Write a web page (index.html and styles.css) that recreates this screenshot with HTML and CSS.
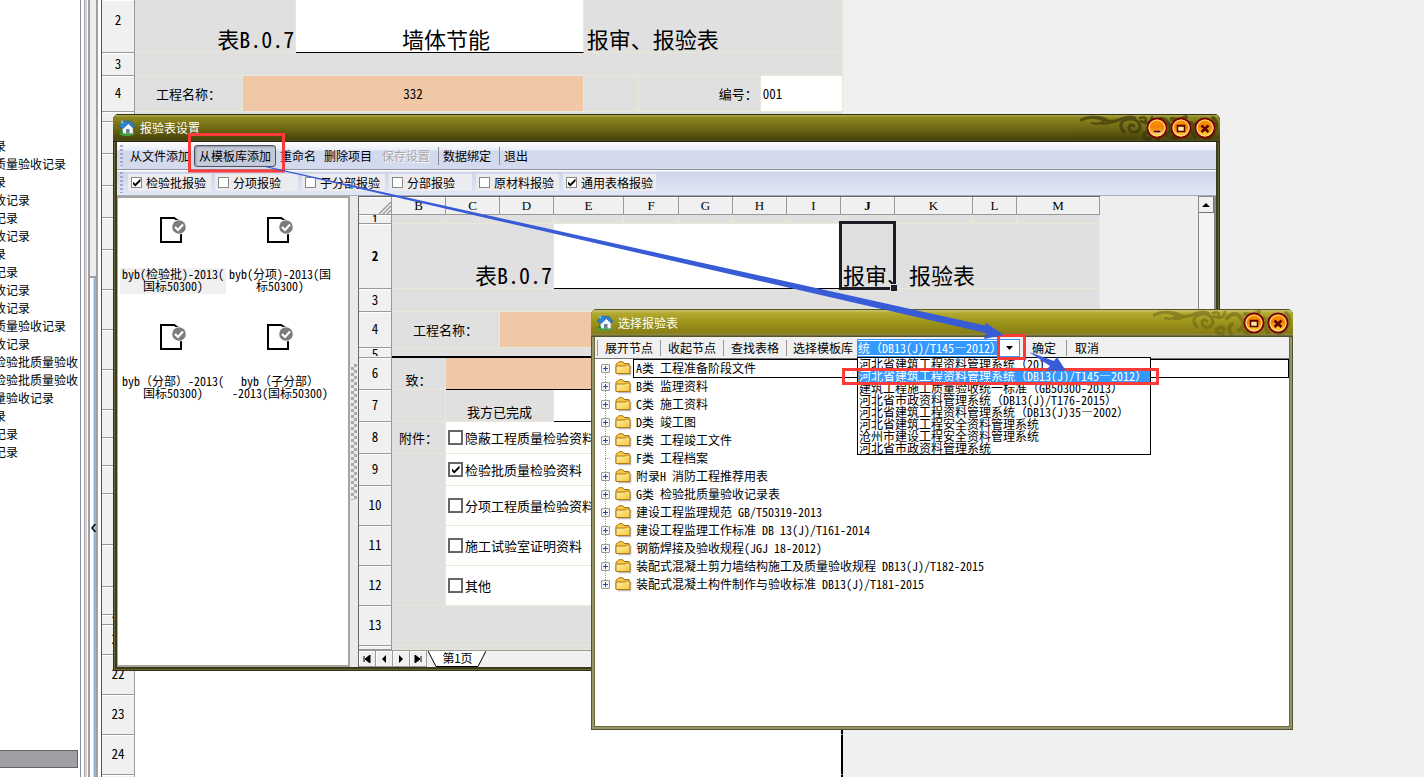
FILE: index.html
```html
<!DOCTYPE html>
<html lang="zh-CN">
<head>
<meta charset="utf-8">
<title>报验表设置</title>
<link rel="stylesheet" href="styles.css">
</head>
<body>
<svg class="defs" aria-hidden="true">
  <defs>
    <linearGradient id="gold" x1="0" y1="0" x2="0" y2="1"><stop offset="0" stop-color="#ff9a00"/><stop offset=".45" stop-color="#f08200"/><stop offset="1" stop-color="#ffe34a"/></linearGradient>
    <linearGradient id="paper" x1="0" y1="0" x2="1" y2="1"><stop offset="0" stop-color="#fff3a8"/><stop offset="1" stop-color="#f6c53c"/></linearGradient>
    <symbol id="house" viewBox="0 0 16 16">
      <ellipse cx="8" cy="13.500" rx="7.500" ry="2.400" fill="#3fa63a"/>
      <path d="M3 7l5.500-4.500L14 7v6.500H3z" fill="#f4f6f8" stroke="#8795a3" stroke-width=".6"/>
      <path d="M0 6l4.500-5L12 1.500 16 6.500l-2 1.500-4.500-4.500L3.500 9z" fill="#2f82cf" stroke="#1a5594" stroke-width=".6"/>
      <path d="M2 .5h2.500v3H2z" fill="#74b8ea"/>
      <path d="M7 9h3.500v4.500H7z" fill="#6e7f8e"/>
      <path d="M.5 13l2.500-4 1.500 5z" fill="#2d8b2b"/>
    </symbol>
    <symbol id="folder" viewBox="0 0 17 15">
      <path d="M3 13.500h12.500V5" fill="none" stroke="#777" stroke-width="1.500" opacity=".5"/>
      <path d="M1 12V3.500Q1 2.500 2 2.500L3 1.500q.5-.8 1.300-.8h3q.9 0 1.200.8l.5 1h4.500q1 0 1 1V12z" fill="#f3c84b" stroke="#a8700f"/>
      <path d="M1 12.500V6q0-1 1-1h8l1.500-1H15v8.500z" fill="url(#paper)" stroke="#b47b14"/>
    </symbol>
    <symbol id="doc" viewBox="0 0 28 28">
      <path d="M16 2H2v24h20V14" fill="#fff" stroke="#000" stroke-width="2"/>
      <path d="M15 2l5 3" stroke="#000" stroke-width="2"/>
      <circle cx="20" cy="11" r="7.500" fill="#fff"/>
      <circle cx="20" cy="11" r="6.800" fill="#7c7c7c"/>
      <path d="M16 11l3 3 5-5.500" fill="none" stroke="#fff" stroke-width="2.200"/>
    </symbol>
    <symbol id="cloud" viewBox="0 0 140 26">
      <g fill="none" stroke="currentColor" stroke-linecap="round">
        <path d="M1 5q10-5 20-1t18 1q10-5 16-2" stroke-width="3"/>
        <path d="M12 8q8 2 12-2M22 9q10-1 14-3M6 3q10-3 20 1" stroke-width="2"/>
        <path d="M44 17q-7-8 1-12 9-3 14 3 3 7-3 9-7 1-7-5 2-4 5-1" stroke-width="3"/>
        <path d="M60 3q6-2 6 2-2 4-5 1M65 8q6 0 7-6" stroke-width="2.500"/>
        <path d="M70 24q-7 0-6-5 4-4 7 0M78 24q-4-6 1-10" stroke-width="4"/>
        <path d="M74 8q8-8 14 0t-2 12M92 22q9 3 9-5t10-9M92 4q8 2 14-2M115 22q-6-8 2-14t14 0q2 7-5 7M133 3q5 4 2 12t-10 8" stroke-width="4"/>
      </g>
    </symbol>
    <symbol id="orb" viewBox="0 0 22 22">
      <circle cx="11" cy="11" r="9.500" fill="url(#gold)" stroke="#7c0000" stroke-width="2"/>
      <circle cx="11" cy="11" r="8" fill="none" stroke="#ffd98a" stroke-width="1.200"/>
    </symbol>
  </defs>
</svg>

<main class="desktop">
  <aside class="records">
    <ul class="record-list">
      <li>录</li><li>质量验收记录</li><li>录</li><li>收记录</li><li>记录</li><li>收记录</li><li>录</li><li>记录</li><li>收记录</li><li>收记录</li><li>质量验收记录</li><li>收记录</li><li>检验批质量验收</li><li>检验批质量验收</li><li>量验收记录</li><li>录</li><li>记录</li><li>记录</li>
    </ul>
    <div class="hthumb"></div>
  </aside>
  <div class="splitter">
    <button class="collapse" aria-label="收起"><svg viewBox="0 0 5 8" width="5" height="8"><path d="M4.500 0L1 4l3.500 4" fill="none" stroke="#000" stroke-width="1.500"/></svg></button>
  </div>
  <table class="sheet back">
    <colgroup><col class="w-head"><col class="w108"><col class="w53"><col class="w287"><col class="w55"><col class="w122"><col class="w82"></colgroup>
    <tr class="h53"><th class="raised">2</th><td colspan="2" class="big right">表B.0.7</td><td class="white under big center name">墙体节能</td><td colspan="3" class="big">报审、报验表</td></tr>
    <tr class="h23"><th>3</th><td colspan="6"></td></tr>
    <tr class="h36"><th>4</th><td class="center">工程名称：</td><td colspan="2" class="orange center">332</td><td></td><td class="right">编号：</td><td class="white">001</td></tr>
    <tr class="h10"><th></th><td colspan="6"></td></tr>
    <tr class="h32"><th></th><td colspan="6"></td></tr>
    <tr class="h32"><th></th><td colspan="6"></td></tr>
    <tr class="h32"><th></th><td colspan="6"></td></tr>
    <tr class="h32"><th></th><td colspan="6"></td></tr>
    <tr class="h40"><th></th><td colspan="6"></td></tr>
    <tr class="h40"><th></th><td colspan="6"></td></tr>
    <tr class="h40"><th></th><td colspan="6"></td></tr>
    <tr class="h40"><th></th><td colspan="6"></td></tr>
    <tr class="h28"><th></th><td colspan="6"></td></tr>
    <tr class="h28"><th></th><td colspan="6"></td></tr>
    <tr class="h28"><th></th><td colspan="6"></td></tr>
    <tr class="h51"><th></th><td colspan="6"></td></tr>
    <tr class="h42"><th></th><td colspan="6"></td></tr>
    <tr class="h28"><th></th><td colspan="6"></td></tr>
    <tr class="h10"><th><div class="clip">20</div></th><td colspan="6"></td></tr>
    <tr class="h30"><th>21</th><td colspan="6" class="page"></td></tr>
    <tr class="h40"><th>22</th><td colspan="6" class="page"></td></tr>
    <tr class="h40"><th>23</th><td colspan="6" class="page"></td></tr>
    <tr class="h40"><th>24</th><td colspan="6" class="page"></td></tr>
    <tr class="h40"><th></th><td colspan="6" class="page"></td></tr>
  </table>

  <section class="window settings">
    <header class="titlebar">
      <svg class="app-icon"><use href="#house"/></svg><h1>报验表设置</h1>
      <svg class="clouds"><use href="#cloud"/></svg>
      <div class="win-buttons">
        <button aria-label="最小化"><svg viewBox="0 0 22 22"><use href="#orb"/><path d="M7 15h8" stroke="#fff3c0" stroke-width="3"/><path d="M7.500 14.500h7" stroke="#6b0000" stroke-width="2"/></svg></button>
        <button aria-label="最大化"><svg viewBox="0 0 22 22"><use href="#orb"/><path d="M7.500 8.500h7v6h-7zM7 9h8" fill="#ffe9a0" stroke="#5c0000" stroke-width="1.600"/></svg></button>
        <button aria-label="关闭"><svg viewBox="0 0 22 22"><use href="#orb"/><path d="M7.500 8.500l7 6.500M14.500 8.500l-7 6.500" stroke="#5c0000" stroke-width="2.400"/></svg></button>
      </div>
    </header>
    <nav class="bar commands">
      <span class="grip"></span>
      <button>从文件添加</button><button class="pressed">从模板库添加</button><button>重命名</button><button>删除项目</button><button class="off" disabled>保存设置</button><span class="sep"></span><button>数据绑定</button><span class="sep"></span><button>退出</button>
    </nav>
    <div class="bar filters">
      <span class="grip"></span>
      <label><input type="checkbox" checked>检验批报验</label>
      <label><input type="checkbox">分项报验</label>
      <label><input type="checkbox">子分部报验</label>
      <label><input type="checkbox">分部报验</label>
      <label><input type="checkbox">原材料报验</label>
      <label><input type="checkbox" checked>通用表格报验</label>
    </div>
    <div class="work">
      <ul class="files">
        <li><svg><use href="#doc"/></svg><span class="current">byb(检验批)-2013(<br>国标50300)</span></li>
        <li><svg><use href="#doc"/></svg><span>byb(分项)-2013(国<br>标50300)</span></li>
        <li><svg><use href="#doc"/></svg><span>byb（分部）-2013(<br>国标50300)</span></li>
        <li><svg><use href="#doc"/></svg><span>byb（子分部）<br>-2013(国标50300)</span></li>
      </ul>
      <div class="divider"><span></span></div>
      <div class="sheet-area">
        <div class="sheet-main">
          <table class="sheet front">
            <colgroup><col class="w-head"><col class="w54"><col class="w54"><col class="w54"><col class="w70"><col class="w55"><col class="w54"><col class="w54"><col class="w54"><col class="w54"><col class="w78"><col class="w44"><col class="w83"></colgroup>
            <tr class="h18 letters"><th class="corner"><svg viewBox="0 0 12 12"><path d="M0 12L12 0M4 12l8-8M8 12l4-4" stroke="#999" stroke-width="1.400"/></svg></th><th>B</th><th>C</th><th>D</th><th>E</th><th>F</th><th>G</th><th>H</th><th>I</th><th class="active">J</th><th>K</th><th>L</th><th>M</th></tr>
            <tr class="h9"><th><div class="clip">1</div></th><td></td><td></td><td></td><td></td><td></td><td></td><td></td><td></td><td></td><td></td><td></td><td></td></tr>
            <tr class="h65"><th class="active">2</th><td colspan="3" class="big right">表B.0.7</td><td colspan="5" class="white under"></td><td colspan="4" class="big pick">报审、报验表<span class="cursor"></span></td></tr>
            <tr class="h23"><th>3</th><td colspan="12"></td></tr>
            <tr class="h36"><th>4</th><td colspan="2" class="center">工程名称：</td><td colspan="10" class="orange"></td></tr>
            <tr class="h10"><th><div class="clip">5</div></th><td colspan="12" class="thick"></td></tr>
            <tr class="h32"><th>6</th><td class="center low">致：</td><td colspan="11" class="orange under"></td></tr>
            <tr class="h32"><th>7</th><td></td><td colspan="2" class="center low">我方已完成</td><td colspan="9" class="white under"></td></tr>
            <tr class="h32"><th>8</th><td class="center">附件：</td><td colspan="11" class="white"><label><input type="checkbox">隐蔽工程质量检验资料</label></td></tr>
            <tr class="h32"><th>9</th><td rowspan="4"></td><td colspan="11" class="white"><label><input type="checkbox" checked>检验批质量检验资料</label></td></tr>
            <tr class="h40"><th>10</th><td colspan="11" class="white"><label><input type="checkbox">分项工程质量检验资料</label></td></tr>
            <tr class="h40"><th>11</th><td colspan="11" class="white"><label><input type="checkbox">施工试验室证明资料</label></td></tr>
            <tr class="h40"><th>12</th><td colspan="11" class="white"><label><input type="checkbox">其他</label></td></tr>
            <tr class="h40"><th>13</th><td colspan="12"></td></tr>
            <tr class="h4"><th></th><td colspan="12"></td></tr>
          </table>
          <div class="tabs">
            <button aria-label="首页"><svg viewBox="0 0 8 8"><path d="M1 1v6M7 0v8L2 4z" stroke="#000" stroke-width="1"/></svg></button>
            <button aria-label="上一页"><svg viewBox="0 0 8 8"><path d="M6 0v8L2 4z"/></svg></button>
            <button aria-label="下一页"><svg viewBox="0 0 8 8"><path d="M2 0v8l4-4z"/></svg></button>
            <button aria-label="末页"><svg viewBox="0 0 8 8"><path d="M7 1v6M1 0v8l5-4z" stroke="#000" stroke-width="1"/></svg></button>
            <div class="tab"><svg viewBox="0 0 58 16"><path d="M0 0l8 15.500h42L58 0" fill="#fff" stroke="#000"/></svg><span>第1页</span></div>
          </div>
        </div>
        <div class="vscroll"><button aria-label="向上"><svg viewBox="0 0 8 4" width="8" height="4"><path d="M0 4l4-4 4 4z"/></svg></button></div>
      </div>
    </div>
  </section>

  <section class="window chooser">
    <header class="titlebar">
      <svg class="app-icon"><use href="#house"/></svg><h2>选择报验表</h2>
      <svg class="clouds"><use href="#cloud"/></svg>
      <div class="win-buttons">
        <button aria-label="最大化"><svg viewBox="0 0 22 22"><use href="#orb"/><path d="M7.500 8.500h7v6h-7zM7 9h8" fill="#ffe9a0" stroke="#5c0000" stroke-width="1.600"/></svg></button>
        <button aria-label="关闭"><svg viewBox="0 0 22 22"><use href="#orb"/><path d="M7.500 8.500l7 6.500M14.500 8.500l-7 6.500" stroke="#5c0000" stroke-width="2.400"/></svg></button>
      </div>
    </header>
    <div class="tools">
      <span class="sep"></span><button>展开节点</button><span class="sep"></span><button>收起节点</button><span class="sep"></span><button>查找表格</button><span class="sep"></span>
      <label for="library">选择模板库</label>
      <div class="combo">
        <input id="library" type="text" value="统（DB13(J)/T145—2012）">
        <button class="drop" aria-label="打开列表"><svg viewBox="0 0 7 4" width="7" height="4"><path d="M0 0h7L3.500 4z"/></svg></button>
        <ul class="options" role="listbox">
          <li role="option">河北省建筑工程资料管理系统（201</li>
          <li role="option" aria-selected="true" class="chosen">河北省建筑工程资料管理系统（DB13(J)/T145—2012）</li>
          <li role="option">建筑工程施工质量验收统一标准（GB50300-2013）</li>
          <li role="option">河北省市政资料管理系统（DB13(J)/T176-2015）</li>
          <li role="option">河北省建筑工程资料管理系统（DB13(J)35—2002）</li>
          <li role="option">河北省建筑工程安全资料管理系统</li>
          <li role="option">沧州市建设工程安全资料管理系统</li>
          <li role="option">河北省市政资料管理系统</li>
        </ul>
      </div>
      <button class="ok">确定</button><span class="sep"></span><button>取消</button>
    </div>
    <ul class="tree">
      <li><button class="plus" aria-label="展开"></button><svg><use href="#folder"/></svg><span class="focus">A类 工程准备阶段文件</span></li>
      <li><button class="plus" aria-label="展开"></button><svg><use href="#folder"/></svg><span>B类 监理资料</span></li>
      <li><button class="plus" aria-label="展开"></button><svg><use href="#folder"/></svg><span>C类 施工资料</span></li>
      <li><button class="plus" aria-label="展开"></button><svg><use href="#folder"/></svg><span>D类 竣工图</span></li>
      <li><button class="plus" aria-label="展开"></button><svg><use href="#folder"/></svg><span>E类 工程竣工文件</span></li>
      <li><i class="leaf"></i><svg><use href="#folder"/></svg><span>F类 工程档案</span></li>
      <li><button class="plus" aria-label="展开"></button><svg><use href="#folder"/></svg><span>附录H 消防工程推荐用表</span></li>
      <li><button class="plus" aria-label="展开"></button><svg><use href="#folder"/></svg><span>G类 检验批质量验收记录表</span></li>
      <li><button class="plus" aria-label="展开"></button><svg><use href="#folder"/></svg><span>建设工程监理规范 GB/T50319-2013</span></li>
      <li><button class="plus" aria-label="展开"></button><svg><use href="#folder"/></svg><span>建设工程监理工作标准 DB 13(J)/T161-2014</span></li>
      <li><button class="plus" aria-label="展开"></button><svg><use href="#folder"/></svg><span>钢筋焊接及验收规程(JGJ 18-2012)</span></li>
      <li><button class="plus" aria-label="展开"></button><svg><use href="#folder"/></svg><span>装配式混凝土剪力墙结构施工及质量验收规程 DB13(J)/T182-2015</span></li>
      <li><button class="plus" aria-label="展开"></button><svg><use href="#folder"/></svg><span>装配式混凝土构件制作与验收标准 DB13(J)/T181-2015</span></li>
    </ul>
  </section>

  <svg class="marks" width="1424" height="777" aria-hidden="true">
    <g fill="none" stroke="#fb3a3a" stroke-width="3">
      <path d="M189.500 134.500h94v36.500h-94zM998.500 335.500h26v23h-26zM843.500 369.500h314v14h-314z"/>
    </g>
    <path d="M265 166L985 325.500l1-2.500 18 12-20 4 2-6L265 167zM1029 352l25 9 3-4 9 14-20-1 4-4z" fill="#385bd6"/>
  </svg>
</main>
</body>
</html>
```
FILE: styles.css
```css
* { box-sizing: border-box; }
body {
  margin: 0;
  height: 100vh;
  overflow: hidden;
  background: #f0f0f0;
  color: #000;
  font: 12px/18px "Noto Sans Mono CJK SC", "Liberation Serif", "Noto Sans CJK SC", sans-serif;
}
ul { list-style: none; margin: 0; padding: 0; }
h1, h2 { margin: 0; font: inherit; }
button, input { font: inherit; color: inherit; margin: 0; padding: 0; border: 0; background: none; white-space: nowrap; }
.defs { position: absolute; width: 0; height: 0; }
.desktop { position: relative; display: flex; height: 100%; overflow: hidden; }

/* Record list behind the windows */
.records {
  flex: none;
  width: 81px;
  padding: 137px 2px 9px 0;
  display: flex;
  flex-direction: column;
  justify-content: space-between;
  overflow: hidden;
  background: #fff;
  border-right: 1px solid #858b9b;
}
.record-list { margin-left: -6px; white-space: nowrap; }
.hthumb { height: 18px; background: #a09fa5; border: 1px solid #636363; border-left: 0; }
.splitter {
  flex: none;
  width: 20px;
  display: flex;
  flex-direction: column;
  padding: 276px 3px 0 8px;
  background: linear-gradient(90deg, #fff 0 3px, #aaa 3px 4px, #d5d0d5 4px 6px, #fff 6px 7px, #a0a0a0 7px 9px, #eee 9px 15px, #a0a0a0 15px 17px, #fff 17px 20px);
}
.collapse {
  flex: 1;
  display: grid;
  place-items: center;
  border-top: 2px solid #a0a0a0;
  background: linear-gradient(90deg, #a0a0a0 0 1px, #fff 1px 4px, #c5deec 4px 5px, #8fb7d4 5px 7px, #a0a0a0 7px 9px);
}

/* Spreadsheets */
.sheet { table-layout: fixed; border-collapse: separate; border-spacing: 0; font-size: 13px; line-height: 18px; flex: none; }
.sheet th {
  padding: 0 0 1px;
  background: #f0f0f0;
  border-right: 1px solid #999;
  border-bottom: 1px solid #999;
  box-shadow: inset 0 1px #fff;
  font-weight: 400;
}
.sheet td {
  padding: 0 2px;
  background: #e0e0e0;
  border-right: 1px solid #e9e7d6;
  border-bottom: 1px solid #e9e7d6;
  white-space: nowrap;
}
.sheet .active { font-weight: 700; }
.sheet .raised { padding-bottom: 12px; }
.back { width: 742px; height: 785px; border-left: 1px solid #555; }
.front { width: 741px; border-left: 1px solid #666; border-top: 1px solid #666; }
.sheet .letters th { padding: 0; font-family: "Liberation Serif", serif; line-height: 17px; }
.sheet .corner { text-align: right; vertical-align: bottom; }
.corner svg { display: block; width: 12px; height: 12px; margin-left: auto; }
.clip { height: 7px; line-height: 9px; overflow: hidden; }
.sheet .white { background: #fff; }
.sheet .orange { background: #f0c8a5; }
.sheet .page { background: #fff; border-bottom-color: #fff; border-right: 2px solid #000; }
.sheet .under { border-bottom-color: #000; }
.sheet .thick { border-bottom: 2px solid #000; }
.sheet .center { text-align: center; }
.sheet .right { text-align: right; }
.sheet .low { vertical-align: bottom; }
.sheet .big { font-size: 22px; line-height: 24px; vertical-align: bottom; padding: 0 1px 2px 3px; }
.sheet .name { padding-left: 14px; }
.sheet .pick { position: relative; padding-left: 2px; }
.cursor { position: absolute; left: -2px; top: -3px; width: 57px; height: 69px; border: 3px solid #1c1c24; }
.cursor::after { content: ""; position: absolute; right: -4px; bottom: -4px; width: 6px; height: 6px; background: #1c1c24; border: solid #e0e0e0; border-width: 1px 0 0 1px; }
.w-head { width: 33px; } .w44 { width: 44px; } .w53 { width: 53px; } .w54 { width: 54px; } .w55 { width: 55px; }
.w70 { width: 70px; } .w78 { width: 78px; } .w82 { width: 82px; } .w83 { width: 83px; } .w108 { width: 108px; }
.w122 { width: 122px; } .w287 { width: 287px; }
.h4 { height: 4px; } .h9 { height: 9px; } .h10 { height: 10px; } .h18 { height: 18px; } .h23 { height: 23px; }
.h28 { height: 28px; } .h30 { height: 30px; } .h32 { height: 32px; } .h36 { height: 36px; } .h40 { height: 40px; }
.h42 { height: 42px; } .h51 { height: 51px; } .h53 { height: 53px; } .h65 { height: 65px; }

/* Check boxes */
input[type="checkbox"] { appearance: none; flex: none; display: grid; place-items: center; width: 11px; height: 11px; background: #fff; border: 1px solid #888; }
input[type="checkbox"]:checked::before { content: ""; width: 8px; height: 8px; background: #000; clip-path: polygon(0 35%, 35% 65%, 100% 0, 100% 35%, 35% 100%, 0 65%); }
.sheet label { display: flex; align-items: center; gap: 2px; }
.sheet input[type="checkbox"] { width: 15px; height: 15px; border: 2px solid #666; }

/* Windows */
.window { position: absolute; display: flex; flex-direction: column; padding: 0 4px 4px; border-radius: 6px 6px 0 0; overflow: hidden; }
.settings { left: 113px; top: 114px; width: 1107px; height: 557px; background: #eee; box-shadow: inset 0 0 0 1px #33331a, inset 0 0 0 2px #66653a, inset 0 0 0 4px #3c3b1c; }
.chooser { left: 591px; top: 309px; width: 702px; height: 421px; background: #fff; box-shadow: inset 0 0 0 1px #55532f, inset 0 0 0 3px #96946a, inset 0 0 0 4px #6b6938; }
.titlebar { position: relative; flex: none; display: flex; align-items: center; gap: 5px; height: 28px; margin: 0 -4px; padding: 0 4px 0 6px; color: #fff; }
.settings .titlebar { background: linear-gradient(#35330f 0 1px, #a5a24a 1px 2px, #8f8920 3px, #6b6513 55%, #48430a 90%, #625f2c 26px, #2c2b14 27px); }
.chooser .titlebar { background: linear-gradient(#55532a 0 1px, #c5be62 1px 2px, #b3aa30 4px, #9b921a 50%, #887e15 85%, #8c8748 26px, #55532a 27px); }
.app-icon { width: 16px; height: 16px; }
.clouds { position: absolute; right: 0; top: 1px; width: 140px; height: 26px; color: #38340c; opacity: .65; }
.chooser .clouds { color: #625d16; opacity: .5; }
.win-buttons { position: relative; display: flex; gap: 2px; margin-left: auto; }
.win-buttons button { width: 22px; height: 22px; }
.win-buttons svg { display: block; width: 22px; height: 22px; }

/* Toolbars of the settings window */
.bar { flex: none; display: flex; align-items: center; }
.commands { height: 28px; padding-left: 3px; border-bottom: 1px solid #8f919c; background: linear-gradient(#fff, #e8edf7 8px, #d3d9ed 9px, #d5dbee); }
.commands button { padding: 0 4px; height: 22px; }
.commands .pressed { border: 1px solid #4d5260; border-radius: 3px; background: #c5cad8; box-shadow: inset 1px 1px 2px #8f94a2; }
.commands .off { color: #a5a6aa; text-shadow: 1px 1px #fff; margin-left: 2px; }
.grip { width: 3px; height: 21px; margin-right: 3px; background: repeating-linear-gradient(#a5abbd 0 2px, transparent 2px 4px); }
.sep { width: 1px; height: 18px; background: #8c8f9b; }
.commands .sep { margin-left: 4px; }
.filters { height: 26px; padding-left: 3px; border-bottom: 1px solid #a5abbc; background: linear-gradient(#fff 0 1px, #cfd5ea 2px, #e2e7f6); gap: 4px; }
.filters .grip { margin-right: 1px; }
.filters label { display: flex; align-items: center; gap: 4px; min-width: 83px; height: 17px; padding: 0 3px; background: #ececef; }

/* Body of the settings window */
.work { flex: 1; display: flex; min-height: 0; }
.files {
  flex: none;
  width: 233px;
  padding: 18px 13px 0 2px;
  display: grid;
  grid-template-columns: 106px 106px;
  grid-auto-rows: 107px;
  column-gap: 1px;
  border: 2px solid #a7a59b;
  border-left-width: 1px;
  background: #fff;
  line-height: 12px;
  text-align: center;
}
.files li { display: flex; flex-direction: column; align-items: center; gap: 24px; }
.files svg { width: 28px; height: 28px; }
.files span { width: 106px; height: 26px; white-space: nowrap; }
.files .current { background: #f0f0f0; }
.divider { flex: none; width: 8px; display: grid; place-items: center; background: #eaeaec; }
.divider span { width: 6px; height: 136px; background: conic-gradient(#aaa 25%, transparent 0 50%, #aaa 0 75%, transparent 0) 0 0 / 6px 6px; }
.sheet-area { flex: 1; display: flex; min-width: 0; }
.sheet-main { flex: 1; min-width: 0; }
.tabs { display: flex; height: 17px; background: #f0f0f0; border-top: 1px solid #999; border-left: 1px solid #666; }
.tabs button { display: grid; place-items: center; width: 17px; height: 16px; border: 1px solid #999; border-width: 0 1px 1px 0; box-shadow: inset 1px 1px #fff; }
.tabs button svg { width: 8px; height: 8px; }
.tab { display: grid; width: 60px; padding-left: 1px; }
.tab > * { grid-area: 1 / 1; }
.tab svg { width: 58px; height: 16px; }
.tab span { text-align: center; line-height: 14px; font-size: 12px; }
.vscroll { flex: none; width: 18px; border: 1px solid #888; border-width: 1px 2px 0 1px; background: #f4f4f4; }
.vscroll button { display: grid; place-items: center; width: 15px; height: 16px; border: 1px solid #777; border-width: 0 1px 1px 0; background: #f0f0f0; }

/* Template chooser */
.tools { flex: none; display: flex; align-items: center; height: 21px; padding: 1px 0 0 2px; background: #f0f0f0; }
.tools button { padding: 0 7px; height: 20px; }
.tools .sep { height: 16px; background: #999; }
.tools label { padding: 0 4px 0 6px; }
.combo { position: relative; display: flex; width: 163px; height: 18px; background: #fff; border: 1px solid #3399ff; }
.combo input { flex: 1; min-width: 0; height: 14px; margin: 1px 0; background: #3399ff; color: #fff; line-height: 14px; }
.combo .drop { flex: none; display: grid; place-items: center; width: 20px; height: 16px; padding: 0; }
.options { position: absolute; z-index: 1; left: -1px; top: 17px; width: 294px; height: 98px; border: 1px solid #000; background: #fff; line-height: 12px; white-space: nowrap; }
.options li { height: 12px; padding-left: 1px; }
.options .chosen { background: #3399ff; color: #fff; outline: 1px dotted #d07820; outline-offset: -1px; }
.tools .ok { padding: 0 10px 0 12px; }
.tools .ok ~ button { padding-left: 8px; }
.tree { flex: 1; border-top: 1px solid #777; padding-left: 6px; background: #fff; }
.tree li { display: flex; align-items: center; height: 18px; background: repeating-linear-gradient(#999 0 1px, transparent 1px 2px) 4px 0 / 1px 100% no-repeat; }
.tree li:first-child { background-position: 4px 9px; }
.tree li:last-child { background-size: 1px 9px; }
.tree svg { flex: none; width: 17px; height: 15px; margin-left: 5px; }
.tree span { padding-left: 2px; margin-left: 2px; height: 17px; line-height: 16px; white-space: nowrap; }
.tree .focus { flex: 1; margin-right: 1px; outline: 1px solid #000; }
.plus { flex: none; width: 9px; height: 9px; border: 1px solid #999; border-radius: 1px; background: linear-gradient(#2a4fa0, #2a4fa0) center / 5px 1px no-repeat, linear-gradient(#2a4fa0, #2a4fa0) center / 1px 5px no-repeat, #f4f4f4; }
.leaf { width: 9px; height: 1px; background: repeating-linear-gradient(90deg, #999 0 1px, transparent 1px 2px) 4px 0 no-repeat; }
.marks { position: absolute; left: 0; top: 0; z-index: 5; pointer-events: none; }
```
